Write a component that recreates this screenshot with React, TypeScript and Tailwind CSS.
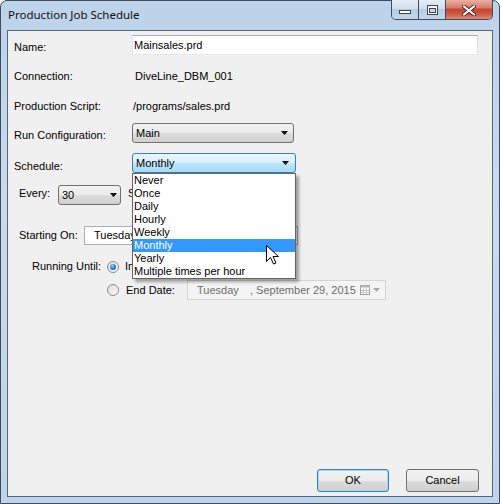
import React from "react";

const scheduleOptions = [
  "Never",
  "Once",
  "Daily",
  "Hourly",
  "Weekly",
  "Monthly",
  "Yearly",
  "Multiple times per hour",
];

const buttonFace =
  "bg-[linear-gradient(to_bottom,#f2f2f2_0%,#ebebeb_50%,#dddddd_51%,#cfcfcf_100%)]";

function Arrow({ color = "#000" }: { color?: string }) {
  return (
    <svg width="7" height="4" viewBox="0 0 7 4" className="shrink-0">
      <path d="M0 0h7L3.5 4z" fill={color} />
    </svg>
  );
}

function CaptionButtons() {
  return (
    <div className="-mt-px mr-[6px] ml-auto flex h-[20px] overflow-hidden rounded-b-[5px] border border-t-0 border-[#3d4d61]">
      <div className="flex w-[27px] items-start justify-center border-r border-[#3d4d61] bg-[linear-gradient(to_bottom,#e4edf7_0%,#d0deee_45%,#b8cbe0_50%,#c6d7ea_100%)] pt-[10px]">
        <svg width="12" height="4" viewBox="0 0 12 4">
          <rect x="0.5" y="0.5" width="11" height="3" fill="#fff" stroke="#3a4656" />
        </svg>
      </div>
      <div className="flex w-[27px] items-start justify-center border-r border-[#3d4d61] bg-[linear-gradient(to_bottom,#e4edf7_0%,#d0deee_45%,#b8cbe0_50%,#c6d7ea_100%)] pt-[5px]">
        <svg width="11" height="10" viewBox="0 0 11 10">
          <rect x="0.5" y="0.5" width="10" height="9" fill="#fff" stroke="#3a4656" />
          <rect x="2.5" y="3.5" width="6" height="4" fill="#c9d7e8" stroke="#3a4656" />
        </svg>
      </div>
      <div className="flex w-[46px] items-start justify-center bg-[linear-gradient(to_bottom,#eab1a4_0%,#d97c6a_40%,#c44630_50%,#cf5a42_75%,#e08d76_100%)] pt-[5px]">
        <svg width="14" height="11" viewBox="0 0 14 11">
          <path d="M2 1.5L12 9.5M12 1.5L2 9.5" stroke="#4a2620" strokeWidth="4" strokeLinecap="square" />
          <path d="M2 1.5L12 9.5M12 1.5L2 9.5" stroke="#fff" strokeWidth="2" strokeLinecap="square" />
        </svg>
      </div>
    </div>
  );
}

function Radio({ checked }: { checked?: boolean }) {
  return (
    <svg width="12" height="12" viewBox="0 0 12 12" className="shrink-0">
      <defs>
        <linearGradient id="rb-face" x1="0" y1="0" x2="1" y2="1">
          <stop offset="0" stopColor="#dcdcdc" />
          <stop offset="1" stopColor="#fbfbfb" />
        </linearGradient>
        <radialGradient id="rb-dot" cx="0.4" cy="0.35" r="0.7">
          <stop offset="0" stopColor="#8fd3ff" />
          <stop offset="0.6" stopColor="#2a8ad4" />
          <stop offset="1" stopColor="#0f4d8a" />
        </radialGradient>
      </defs>
      <circle cx="6" cy="6" r="5.5" fill="url(#rb-face)" stroke="#8a8a8a" />
      {checked && <circle cx="6" cy="6" r="3" fill="url(#rb-dot)" />}
    </svg>
  );
}

function Cursor() {
  return (
    <svg
      width="13"
      height="20"
      viewBox="0 0 13 20"
      className="absolute top-[244px] left-[265px] z-20"
    >
      <path
        d="M0.5 0.5V16.5L4.5 12.5L7.5 19L10 18L7 11.5H12.5Z"
        fill="#fff"
        stroke="#000"
        strokeLinejoin="round"
      />
    </svg>
  );
}

export default function App() {
  return (
    <div className="h-[504px] w-[500px] bg-white">
      <div className="relative flex h-full w-full flex-col rounded-t-[7px] border border-[#3c4b5d] bg-[linear-gradient(to_bottom,#bcd3ea_0%,#c8daee_40%,#bfd4ea_100%)]">
        {/* caption */}
        <div className="flex h-[29px] shrink-0">
          <span className="pt-[6px] pl-[7px] font-['Noto_Sans',sans-serif] text-[11.5px] leading-[16px] text-[#111]">
            Production Job Schedule
          </span>
          <CaptionButtons />
        </div>

        {/* client area */}
        <div className="mx-[6px] mb-[6px] flex flex-1 flex-col border border-[#56677b] bg-[#f0f0f0] font-['Liberation_Sans',Arial,sans-serif] text-[11px] leading-[13px] text-black">
          <div className="mt-[4px] flex items-start pl-[6px]">
            <span className="w-[118px] pt-[6px]">Name:</span>
            <div className="flex h-[20px] w-[346px] items-center border border-t-[#abadb3] border-r-[#dbdfe6] border-b-[#e3e9ef] border-l-[#e2e3ea] bg-white pl-[1px]">
              Mainsales.prd
            </div>
          </div>

          <div className="mt-[15px] flex pl-[6px]">
            <span className="w-[118px]">Connection:</span>
            <span className="pl-[3px]">DiveLine_DBM_001</span>
          </div>

          <div className="mt-[17px] flex pl-[6px]">
            <span className="w-[118px]">Production Script:</span>
            <span className="pl-[1px]">/programs/sales.prd</span>
          </div>

          <div className="mt-[10px] flex items-start pl-[6px]">
            <span className="w-[118px] pt-[6px]">Run Configuration:</span>
            <div className={`flex h-[20px] w-[162px] items-center justify-between rounded-[3px] border border-[#707070] ${buttonFace} pr-[5px] pl-[3px]`}>
              <span>Main</span>
              <Arrow />
            </div>
          </div>

          <div className="mt-[10px] flex items-start pl-[6px]">
            <span className="w-[118px] pt-[7px]">Schedule:</span>
            <div className="relative z-10">
              <div className="flex h-[20px] w-[164px] items-center justify-between rounded-[3px] border border-[#3c7fb1] bg-[linear-gradient(to_bottom,#eaf6fd_0%,#d9f0fc_50%,#bee6fd_51%,#a7d9f5_100%)] pr-[6px] pl-[3px]">
                <span>Monthly</span>
                <Arrow />
              </div>
              <ul className="absolute top-[20px] left-0 w-[164px] border border-[#646464] bg-white shadow-[3px_3px_3px_rgba(0,0,0,0.35)]">
                {scheduleOptions.map((opt) => (
                  <li
                    key={opt}
                    className={
                      opt === "Monthly"
                        ? "h-[13px] bg-[#3399ff] pl-[1px] text-white"
                        : "h-[13px] pl-[1px]"
                    }
                  >
                    {opt}
                  </li>
                ))}
              </ul>
            </div>
          </div>

          <div className="mt-[12px] flex items-start pl-[11px]">
            <span className="w-[39px] pt-[2px]">Every:</span>
            <div className={`flex h-[20px] w-[63px] items-center justify-between rounded-[3px] border border-[#707070] ${buttonFace} pr-[3px] pl-[3px]`}>
              <span>30</span>
              <Arrow />
            </div>
            <span className="pt-[2px] pl-[7px]">Seconds</span>
          </div>

          <div className="mt-[21px] flex items-start pl-[11px]">
            <span className="w-[65px] pt-[3px]">Starting On:</span>
            <div className="flex h-[19px] w-[214px] items-center border border-[#abadb3] bg-white pl-[9px]">
              Tuesday
            </div>
          </div>

          <div className="mt-[15px] flex items-start pl-[24px]">
            <span className="w-[75px]">Running Until:</span>
            <div className="pt-[1px]">
              <Radio checked />
            </div>
            <span className="pl-[6px]">Indefinitely</span>
          </div>

          <div className="mt-[7px] flex items-start pl-[99px]">
            <div className="pt-[4px]">
              <Radio />
            </div>
            <span className="w-[68px] pt-[4px] pl-[7px]">End Date:</span>
            <div className="flex h-[20px] w-[199px] items-center border border-[#d5d5d5] bg-[#f4f4f4] pl-[9px] text-[#6d6d6d]">
              <span className="w-[53px]">Tuesday</span>
              <span>, September 29, 2015</span>
              <svg width="10" height="10" viewBox="0 0 10 10" className="ml-auto">
                <rect x="0.5" y="0.5" width="9" height="9" fill="#fff" stroke="#a0a0a0" />
                <rect x="0.5" y="0.5" width="9" height="2" fill="#b8b8b8" />
                <path d="M3.5 3v6M6.5 3v6M1 5.5h8M1 7.5h8" stroke="#c8c8c8" />
              </svg>
              <span className="mr-[5px] ml-[3px]">
                <Arrow color="#a8a8a8" />
              </span>
            </div>
          </div>

          <div className="mt-auto flex justify-end gap-[17px] pr-[13px] pb-[4px]">
            <button className="h-[23px] w-[72px] rounded-[3px] border border-[#3c7fb1] bg-[linear-gradient(to_bottom,#f2f2f2_0%,#ebebeb_50%,#dddddd_51%,#cfcfcf_100%)] shadow-[inset_0_0_0_1px_#9fdcf8] text-black">
              OK
            </button>
            <button className={`h-[23px] w-[73px] rounded-[3px] border border-[#707070] ${buttonFace} text-black`}>
              Cancel
            </button>
          </div>
        </div>

        <Cursor />
      </div>
    </div>
  );
}
